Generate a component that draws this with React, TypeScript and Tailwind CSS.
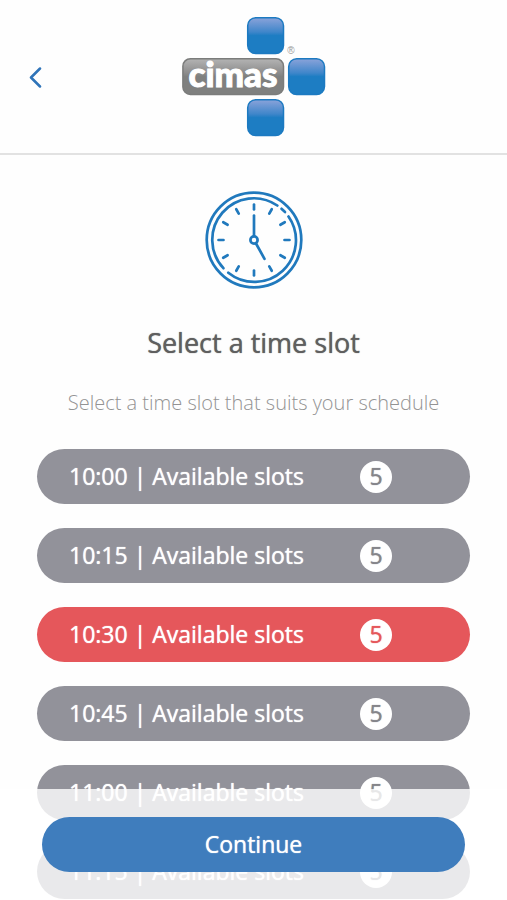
import { useState } from "react";

type Slot = {
  time: string;
  available: number;
};

const slots: Slot[] = [
  { time: "10:00", available: 5 },
  { time: "10:15", available: 5 },
  { time: "10:30", available: 5 },
  { time: "10:45", available: 5 },
  { time: "11:00", available: 5 },
  { time: "11:15", available: 5 },
];

const hourMarks = [0, 30, 60, 90, 120, 150, 180, 210, 240, 270, 300, 330];

const logoTiles = [
  { x: 65, y: 1 },
  { x: 106, y: 42 },
  { x: 65, y: 83 },
];

function Logo() {
  return (
    <svg width="144" height="122" viewBox="0 0 144 122" role="img" aria-label="Cimas">
      <defs>
        <linearGradient id="tile" x1="0" y1="0" x2="0" y2="1">
          <stop offset="0" stopColor="#8ba3da" />
          <stop offset="0.4" stopColor="#3f86ca" />
          <stop offset="0.5" stopColor="#1d7dc3" />
          <stop offset="1" stopColor="#1d7dc3" />
        </linearGradient>
        <linearGradient id="plate" x1="0" y1="0" x2="0" y2="1">
          <stop offset="0" stopColor="#b4b4b4" />
          <stop offset="0.4" stopColor="#8c8c8c" />
          <stop offset="0.5" stopColor="#7f807f" />
          <stop offset="1" stopColor="#7f807f" />
        </linearGradient>
      </defs>
      {logoTiles.map((tile) => (
        <rect
          key={`${tile.x}-${tile.y}`}
          x={tile.x + 0.7}
          y={tile.y + 0.7}
          width="35.8"
          height="35.8"
          rx="8"
          fill="url(#tile)"
          stroke="#1c7ac1"
          strokeWidth="1.5"
        />
      ))}
      <rect
        x="0.9"
        y="42.7"
        width="100.6"
        height="35.8"
        rx="7.5"
        fill="url(#plate)"
        stroke="#7b7c7b"
        strokeWidth="1.5"
      />
      <text
        x="51"
        y="71"
        textAnchor="middle"
        fontFamily="Lato, sans-serif"
        fontWeight="900"
        fontSize="35"
        fill="#fff"
        stroke="#fff"
        strokeWidth="1"
      >
        cimas
      </text>
      <text
        x="109"
        y="38"
        textAnchor="middle"
        fontFamily="Liberation Sans, sans-serif"
        fontSize="10"
        fill="#999"
      >
        ®
      </text>
    </svg>
  );
}

function ClockIcon() {
  return (
    <svg
      width="98"
      height="98"
      viewBox="0 0 98 98"
      fill="none"
      stroke="#2079bd"
      strokeWidth="2.7"
      strokeLinecap="round"
      aria-hidden="true"
    >
      <circle cx="49" cy="49" r="47.3" />
      <path d="M18.4 77.2A41.6 41.6 0 0 1 72.3 14.5" />
      <path d="M76.5 17.8L80 21" />
      <path d="M83.5 25.5A41.6 41.6 0 0 1 23.3 81.7" />
      {hourMarks.map((angle) => (
        <path key={angle} d="M49 13.5v5" transform={`rotate(${angle} 49 49)`} />
      ))}
      <path d="M49 24.5V45" />
      <path d="M51 52.5L59.5 67.8" />
      <circle cx="49" cy="49" r="3.6" />
    </svg>
  );
}

type SlotButtonProps = {
  slot: Slot;
  selected: boolean;
  onSelect: (time: string) => void;
};

function SlotButton({ slot, selected, onSelect }: SlotButtonProps) {
  return (
    <button
      type="button"
      aria-pressed={selected}
      onClick={() => onSelect(slot.time)}
      className={`flex h-[55px] w-full items-center justify-between rounded-full pr-[78px] pl-8 text-[23px] font-medium text-white [text-shadow:0_0_1px_currentColor] ${
        selected ? "bg-[#e5575b]" : "bg-[#92929a]"
      }`}
    >
      <span className="whitespace-nowrap">
        {slot.time} | Available slots
      </span>
      <span
        className={`flex size-8 shrink-0 items-center justify-center rounded-full bg-white ${
          selected ? "text-[#e5575b]" : "text-[#85858a]"
        }`}
      >
        {slot.available}
      </span>
    </button>
  );
}

export default function App() {
  const [selectedTime, setSelectedTime] = useState("10:30");

  return (
    <div className="min-h-screen bg-[#fefefe] font-['Open_Sans',sans-serif]">
      <header className="grid grid-cols-[1fr_auto_1fr] items-center border-b-2 border-[#e2e2e2] px-7 pt-4 pb-[15px]">
        <button
          type="button"
          aria-label="Back"
          className="flex h-8 w-8 items-center text-[#2f74b9]"
        >
          <svg
            width="15"
            height="22"
            viewBox="0 0 15 22"
            fill="none"
            stroke="currentColor"
            strokeWidth="2.5"
            strokeLinecap="round"
            strokeLinejoin="round"
            aria-hidden="true"
          >
            <path d="M12 2.5L3 11.5L12 20.5" />
          </svg>
        </button>
        <Logo />
      </header>

      <main className="flex flex-col items-center px-[37px] pt-9">
        <ClockIcon />
        <h1 className="mt-9 text-[27px] leading-9 font-medium text-[#5f5f5f] [text-shadow:0_0_1px_currentColor]">
          Select a time slot
        </h1>
        <p className="mt-7 text-xl leading-7 font-light text-[#939393]">
          Select a time slot that suits your schedule
        </p>

        <ul className="mt-8 flex w-full flex-col gap-6">
          {slots.map((slot) => (
            <li key={slot.time}>
              <SlotButton
                slot={slot}
                selected={slot.time === selectedTime}
                onSelect={setSelectedTime}
              />
            </li>
          ))}
        </ul>
      </main>

      <footer className="fixed inset-x-0 bottom-0 bg-white/80 px-[42px] py-7">
        <button
          type="button"
          className="h-[55px] w-full rounded-full bg-[#3f7dbd] text-[23px] font-medium text-white [text-shadow:0_0_1px_currentColor]"
        >
          Continue
        </button>
      </footer>
    </div>
  );
}
